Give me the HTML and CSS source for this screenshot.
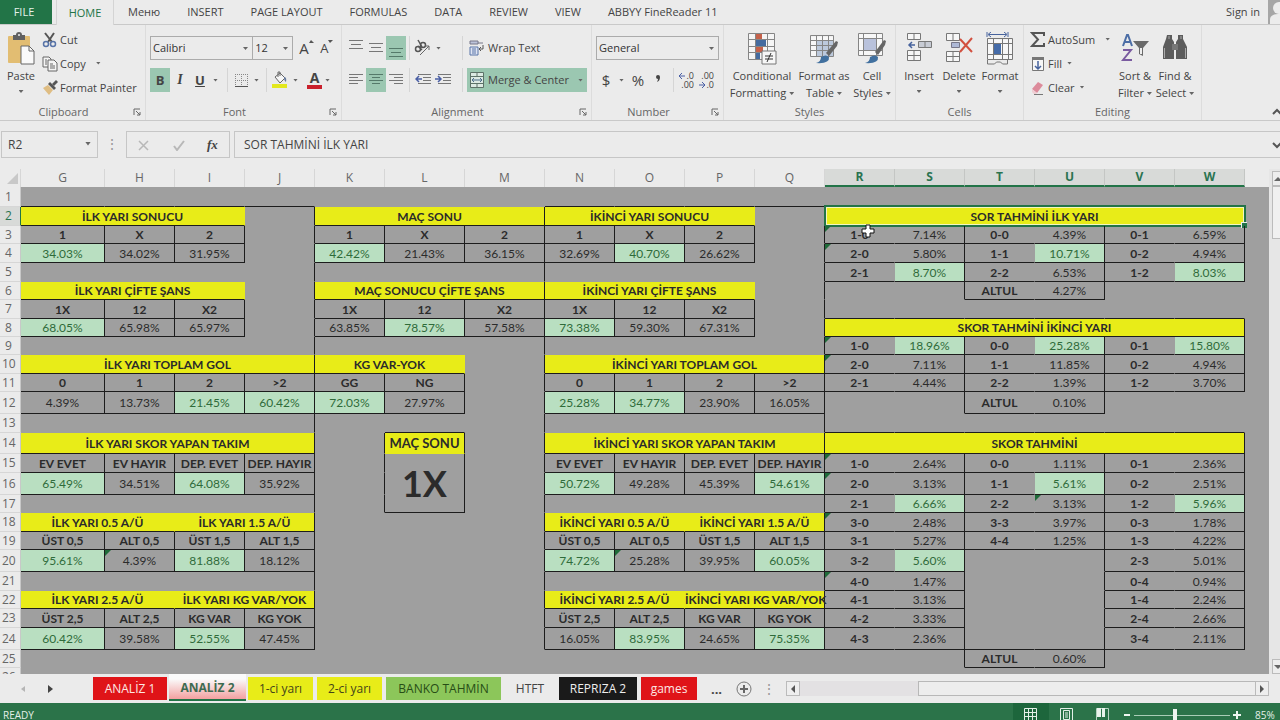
FILE: index.html
```html
<!DOCTYPE html>
<html lang="tr">
<head>
<meta charset="utf-8">
<title>ANALİZ 2</title>
<link rel="stylesheet" href="styles.css">
</head>
<body>
<div class="app">
  <nav class="tabs">
    <button class="file">FILE</button>
    <button class="tab home">HOME</button>
    <button class="tab">Меню</button>
    <button class="tab">INSERT</button>
    <button class="tab">PAGE LAYOUT</button>
    <button class="tab">FORMULAS</button>
    <button class="tab">DATA</button>
    <button class="tab">REVIEW</button>
    <button class="tab">VIEW</button>
    <button class="tab">ABBYY FineReader 11</button>
    <button class="signin">Sign in</button>
    <svg class="avatar" width="12" height="24" viewBox="0 0 12 24"><path fill="#a6a6a6" d="M0 0h12v24H0z"/><circle cx="11" cy="8" r="6" fill="#ececec"/><path d="M2 24v-4c0-5 4-6 10-6v10z" fill="#ececec"/></svg>
  </nav>

  <div class="ribbon">
    <section class="group g-clip">
      <div class="content">
        <button class="big paste">
          <svg width="28" height="34" viewBox="0 0 28 34"><rect x="1" y="4" width="22" height="27" rx="1" fill="#e2bd72"/><path d="M6 3h3a3 3 0 0 1 6 0h3v5H6z" fill="#606060"/><circle cx="12" cy="3" r="1" fill="#eee"/><path d="M14 14h8l5 5v13H14z" fill="#fafafa" stroke="#666"/><path d="M22 14v5h5" fill="none" stroke="#666"/></svg>
          <span>Paste</span><i class="caret"></i>
        </button>
        <div class="rows">
          <button class="row"><svg width="16" height="16" viewBox="0 0 16 16"><path d="M3 1l7 9M12 1L6 10" stroke="#555" stroke-width="2"/><circle cx="4" cy="12" r="2.500" fill="none" stroke="#5874a8" stroke-width="1.500"/><circle cx="11" cy="12" r="2.500" fill="none" stroke="#5874a8" stroke-width="1.500"/></svg>Cut</button>
          <button class="row"><svg width="16" height="16" viewBox="0 0 16 16"><path d="M1 1h6l2 2v8H1z" fill="#f4f4f4" stroke="#666"/><path d="M6 4h6l3 3v8H6z" fill="#f4f4f4" stroke="#666"/><path d="M3 4h2M3 6h2M3 8h2M8 8h3M8 10h5M8 12h5" stroke="#666"/></svg>Copy<i class="caret wide"></i></button>
          <button class="row"><svg width="16" height="16" viewBox="0 0 16 16"><path d="M1 8l5-3 5 5-4 5z" fill="#dfbd83"/><path d="M6 4l2-2 6 6-2 2z" fill="#555"/><path d="M10 4l4-4 2 2-4 4z" fill="#555"/></svg>Format Painter</button>
        </div>
      </div>
      <footer><span>Clipboard</span><svg class="launch" width="8" height="8" viewBox="0 0 8 8"><path d="M1 7V1h6M3 3l4 4M7 4v3H4" fill="none" stroke="#666"/></svg></footer>
    </section>

    <section class="group g-font">
      <div class="content two">
        <div class="line">
          <select class="combo c-font" aria-label="Font"><option>Calibri</option></select><select class="combo c-size" aria-label="Font size"><option>12</option></select>
          <button class="ic grow" aria-label="Increase font size">A<svg width="5" height="4" viewBox="0 0 5 4"><path d="M0 3l2-3 3 3z" fill="#555"/></svg></button>
          <button class="ic shrink" aria-label="Decrease font size">A<svg width="5" height="4" viewBox="0 0 5 4"><path d="M0 0h5L2 3z" fill="#555"/></svg></button>
        </div>
        <div class="line">
          <button class="ic on b">B</button><button class="ic i">I</button><button class="ic u">U</button><i class="caret"></i>
          <i class="sep push"></i>
          <button class="ic" aria-label="Borders"><svg width="13" height="13" viewBox="0 0 13 13"><path d="M.5 0v12M6.500 0v12M12.500 0v12M0 .5h13M0 6.500h13" stroke="#888" stroke-dasharray="1 1"/><path d="M0 12.500h13" stroke="#555"/></svg></button><i class="caret"></i>
          <i class="sep"></i>
          <button class="ic" aria-label="Fill color"><svg width="16" height="18" viewBox="0 0 16 18"><path d="M3 6l5-4 5 5-5 5z" fill="#f6f6f6" stroke="#666"/><path d="M6 6V1h2v4" fill="none" stroke="#666"/><path d="M12 6q3 0 2 5-2-1-2-5" fill="#667a9e"/><path d="M0 13h15v4H0z" fill="#e3e81e"/></svg></button><i class="caret"></i>
          <button class="ic fc" aria-label="Font color">A</button><i class="caret"></i>
        </div>
      </div>
      <footer><span>Font</span><svg class="launch" width="8" height="8" viewBox="0 0 8 8"><path d="M1 7V1h6M3 3l4 4M7 4v3H4" fill="none" stroke="#666"/></svg></footer>
    </section>

    <section class="group g-align">
      <div class="content two">
        <div class="line">
          <button class="ic" aria-label="Top align"><svg width="14" height="20" viewBox="0 0 14 20"><path d="M0 2.500h14M2 6.500h10M0 10.500h14" stroke="#777"/></svg></button>
          <button class="ic" aria-label="Middle align"><svg width="14" height="20" viewBox="0 0 14 20"><path d="M0 5.500h14M2 9.500h10M0 13.500h14" stroke="#777"/></svg></button>
          <button class="ic on" aria-label="Bottom align"><svg width="14" height="20" viewBox="0 0 14 20"><path d="M0 10.500h14M2 14.500h10M0 18.500h14" stroke="#557a6a"/></svg></button>
          <i class="sep"></i>
          <button class="ic" aria-label="Orientation"><svg width="18" height="18" viewBox="0 0 18 18"><g fill="none" stroke="#555" stroke-width="1.500"><circle cx="4" cy="10" r="2.500"/><path d="M4 7l4 4"/><circle cx="9" cy="6" r="2.500"/><path d="M4 1l4 7"/></g><path d="M6 16l9-9M15 7h-4M15 7v4" stroke="#666" fill="none"/></svg></button><i class="caret"></i>
          <i class="sep end"></i>
          <button class="wide-btn"><svg width="17" height="16" viewBox="0 0 17 16"><path d="M1 1h8v3H1z" fill="#bcc3da" stroke="#778"/><path d="M9 3h5" stroke="#778"/><path d="M1 7h8v8H1zM3 9h4M3 11h4M3 13h4" fill="#dfe4f2" stroke="#5874a8"/><path d="M14 5v4h-4M12 7l-2 2 2 2" fill="none" stroke="#555"/></svg>Wrap Text</button>
        </div>
        <div class="line">
          <button class="ic" aria-label="Align left"><svg width="14" height="12" viewBox="0 0 14 12"><path d="M0 .5h14M0 3.500h9M0 6.500h14M0 9.500h9" stroke="#777"/></svg></button>
          <button class="ic on" aria-label="Center"><svg width="14" height="12" viewBox="0 0 14 12"><path d="M0 .5h14M3 3.500h8M0 6.500h14M3 9.500h8" stroke="#557a6a"/></svg></button>
          <button class="ic" aria-label="Align right"><svg width="14" height="12" viewBox="0 0 14 12"><path d="M0 .5h14M5 3.500h9M0 6.500h14M5 9.500h9" stroke="#777"/></svg></button>
          <i class="sep"></i>
          <button class="ic" aria-label="Decrease indent"><svg width="16" height="12" viewBox="0 0 16 12"><path d="M3 .5h13M8 3.500h8M8 6.500h8M3 9.500h13" stroke="#777"/><path d="M7 5H1M4 2L1 5l3 3" stroke="#4a5fa5" stroke-width="1.500" fill="none"/></svg></button>
          <button class="ic" aria-label="Increase indent"><svg width="16" height="12" viewBox="0 0 16 12"><path d="M3 .5h13M8 3.500h8M8 6.500h8M3 9.500h13" stroke="#777"/><path d="M0 5h6M3 2l3 3-3 3" stroke="#4a5fa5" stroke-width="1.500" fill="none"/></svg></button>
          <i class="sep end"></i>
          <button class="wide-btn on"><svg width="17" height="16" viewBox="0 0 17 16"><path d="M1.500 .5h13v15h-13zM1.500 4.500h13M1.500 11.500h13M8 .5v4M8 11.500v4" fill="#dceae3" stroke="#5d7268"/><path d="M3 8h10M5 6L3 8l2 2M11 6l2 2-2 2" fill="none" stroke="#4d6d8a"/></svg>Merge &amp; Center<i class="caret last"></i></button>
        </div>
      </div>
      <footer><span>Alignment</span><svg class="launch" width="8" height="8" viewBox="0 0 8 8"><path d="M1 7V1h6M3 3l4 4M7 4v3H4" fill="none" stroke="#666"/></svg></footer>
    </section>

    <section class="group g-num">
      <div class="content two">
        <div class="line"><select class="combo c-num" aria-label="Number format"><option>General</option></select></div>
        <div class="line">
          <button class="ic sym">$</button><i class="caret"></i><button class="ic sym">%</button><button class="ic" aria-label="Comma style"><svg width="6" height="10" viewBox="0 0 6 10"><path d="M1 2a2 2 0 1 1 4 0q0 4-3 5 1-2 1-3-2 0-2-2" fill="#444"/></svg></button>
          <i class="sep push"></i>
          <button class="ic dec" aria-label="Increase decimal"><span class="up"><svg width="6" height="6" viewBox="0 0 6 6"><path d="M0 3h6M3 0L0 3l3 3" stroke="#4a5fa5" fill="none"/></svg>.0</span><span>.00</span></button>
          <button class="ic dec" aria-label="Decrease decimal"><span>.00</span><span class="up"><svg width="6" height="6" viewBox="0 0 6 6"><path d="M0 3h6M3 0l3 3-3 3" stroke="#4a5fa5" fill="none"/></svg>.0</span></button>
        </div>
      </div>
      <footer><span>Number</span><svg class="launch" width="8" height="8" viewBox="0 0 8 8"><path d="M1 7V1h6M3 3l4 4M7 4v3H4" fill="none" stroke="#666"/></svg></footer>
    </section>

    <section class="group g-styles">
      <div class="content">
        <button class="big w72"><svg width="30" height="34" viewBox="0 0 30 34"><path d="M2 2h25v25H2z" fill="#f5f5f5"/><path d="M8 2h7v6H8zM8 15h8v5H8z" fill="#c5614a"/><path d="M8 8h11v6H8zM8 21h5v6H8z" fill="#456b9f"/><path d="M1.500 1.500h26v26h-26zM8.500 1v26M20.500 1v26M1 7.500h26M1 14.500h26M1 20.500h26" fill="none" stroke="#858585"/><path d="M15 19h14v13H15z" fill="#f7f7f7" stroke="#777"/><path d="M18 24h8M18 27h8M24 21l-4 9" stroke="#333"/></svg><span>Conditional</span><span>Formatting<i class="caret"></i></span></button>
        <button class="big w52"><svg width="30" height="34" viewBox="0 0 30 34"><path d="M1.500 4.500h23v20h-23z" fill="#f7f7f7"/><path d="M7 9h18v15H7z" fill="#bcc9dc"/><path d="M1.500 3.500h23v21h-23zM7.500 3v21M13.500 3v21M19.500 3v21M1 8.500h23M1 13.500h23M1 18.500h23" fill="none" stroke="#858585"/><path d="M17 21l10-12 2 1-1 4-8 10z" fill="#666"/><path d="M7 31q5-1 5-6 5-3 8 0 1 7-13 6z" fill="#41709f"/></svg><span>Format as</span><span>Table<i class="caret"></i></span></button>
        <button class="big w44"><svg width="30" height="34" viewBox="0 0 30 34"><path d="M1.500 1.500h24v22h-24z" fill="#f7f7f7"/><path d="M7 7h12v12H7z" fill="#b9c2dc"/><path d="M1.500 1.500h24v22h-24zM6.500 1v22M19.500 1v22M1 6.500h24M1 18.500h24" fill="none" stroke="#858585"/><path d="M18 20l9-12 2 1-1 4-7 10z" fill="#666"/><path d="M8 31q5-1 5-6 5-3 8 0 1 7-13 6z" fill="#41709f"/></svg><span>Cell</span><span>Styles<i class="caret"></i></span></button>
      </div>
      <footer><span>Styles</span></footer>
    </section>

    <section class="group g-cells">
      <div class="content">
        <button class="big w40"><svg width="28" height="34" viewBox="0 0 28 34"><path d="M2.500 1.500h13v6h-13zM9 1v6M2.500 18.500h13v10h-13zM9 18v10M2 23.500h13" fill="#f7f7f7" stroke="#777"/><path d="M13.500 9.500h13v6h-13z" fill="#c7cbd4" stroke="#777"/><path d="M20 9v6" stroke="#777"/><path d="M10 13H4M7 10l-3 3 3 3" fill="none" stroke="#47639d" stroke-width="1.500"/></svg><span>Insert</span><i class="caret"></i></button>
        <button class="big w40"><svg width="28" height="34" viewBox="0 0 28 34"><path d="M1.500 1.500h13v7h-13zM8 1v7M1.500 19.500h13v10h-13zM8 19v10M1 24.500h13" fill="#f7f7f7" stroke="#777"/><path d="M6.500 10.500h8v5h-8z" fill="#aeb9d6" stroke="#778"/><path d="M15 7l12 13M27 6L15 20" stroke="#d2503f" stroke-width="2"/></svg><span>Delete</span><i class="caret"></i></button>
        <button class="big w42"><svg width="28" height="34" viewBox="0 0 28 34"><path d="M1 0v5M22 0v5M3 2.500h17M5 0L2 2.500 5 5M18 0l3 2.500L18 5" fill="none" stroke="#47639d"/><path d="M1.500 7.500h25v20h-25z" fill="#f7f7f7"/><path d="M8 12h7v11H8z" fill="#456ba8"/><path d="M1.500 6.500h25v21h-25zM7.500 6v21M16.500 6v21M22.500 6v21M1 11.500h25M1 22.500h25M1.500 28v4h7l2-2h4l2 2h5v-4" fill="none" stroke="#777"/></svg><span>Format</span><i class="caret"></i></button>
      </div>
      <footer><span>Cells</span></footer>
    </section>

    <section class="group g-edit">
      <div class="content">
        <div class="rows">
          <button class="row"><svg width="16" height="18" viewBox="0 0 16 18"><path d="M14 5V2H2l6 6.500L2 15h12v-3" fill="none" stroke="#555" stroke-width="2"/></svg>AutoSum<i class="caret wide"></i></button>
          <button class="row"><svg width="16" height="16" viewBox="0 0 16 16"><path d="M2.500 1.500h11v13h-11z" fill="#f7f7f7" stroke="#777"/><path d="M2 1h12v3H2z" fill="#777"/><path d="M8 5v8M5 10l3 3 3-3" stroke="#47639d" stroke-width="1.500" fill="none"/></svg>Fill<i class="caret"></i></button>
          <button class="row"><svg width="16" height="16" viewBox="0 0 16 16"><path d="M2 9l6-7 5 3-6 8z" fill="#dc8b9b"/><path d="M2 9l5 4-1 1H4l-2-2z" fill="#f0cdd3"/><path d="M4 14.500h9" stroke="#777"/></svg>Clear<i class="caret"></i></button>
        </div>
        <button class="big w40"><svg width="28" height="34" viewBox="0 0 28 34"><path d="M2 14L6 3h1l4 11M3 10h7" stroke="#4c6ea6" stroke-width="2" fill="none"/><path d="M2 18h8L2 28h9" stroke="#7a5ba0" stroke-width="2" fill="none"/><path d="M12 9h16l-6 7v8l-4-2v-6z" fill="#6a6a6a"/><path d="M19 16h2v6h-2z" fill="#eee"/></svg><span>Sort &amp;</span><span>Filter<i class="caret"></i></span></button>
        <button class="big w40"><svg width="28" height="34" viewBox="0 0 28 34"><path d="M6 3h5v4l2 3v17H2V15l3-8zM17 3h5v4l4 8v12H15V10l2-3z" fill="#5c5c5c"/><path d="M11 12h6v6h-6z" fill="#777"/><path d="M3.500 16v10M24.500 16v10M8 4v3M20 4v3" stroke="#aaa"/></svg><span>Find &amp;</span><span>Select<i class="caret"></i></span></button>
      </div>
      <footer><span>Editing</span></footer>
    </section>
    <button class="collapse" aria-label="Collapse the ribbon"><svg width="8" height="8" viewBox="0 0 8 8"><path d="M1 6l4-4 4 4" fill="none" stroke="#555" stroke-width="2"/></svg></button>
  </div>

  <div class="formula">
    <div class="namebox"><input aria-label="Name box" value="R2"><i class="caret"></i></div>
    <span class="dots">⋮</span>
    <div class="fxbox">
      <button aria-label="Cancel"><svg width="12" height="12" viewBox="0 0 12 12"><path d="M1 2l9 9M10 2l-9 9" stroke="#b8b8b8" stroke-width="1.500"/></svg></button>
      <button aria-label="Enter"><svg width="12" height="12" viewBox="0 0 12 12"><path d="M1 7l3 4 7-9" stroke="#b8b8b8" stroke-width="2" fill="none"/></svg></button>
      <button class="fx">fx</button>
    </div>
    <div class="fval"><input aria-label="Formula bar" value="SOR TAHMİNİ İLK YARI"><svg width="8" height="8" viewBox="0 0 8 8"><path d="M1 2l4 4 4-4" fill="none" stroke="#555" stroke-width="2"/></svg></div>
  </div>

  <main class="sheet">
    <div class="grid"><table id="cells"></table></div>
    <div class="vscroll"><button aria-label="Scroll up"><svg width="6" height="4" viewBox="0 0 6 4"><path d="M0 4l4-4 4 4z" fill="#666"/></svg></button><div class="vthumb"></div><div class="vtrack"></div><button aria-label="Scroll down"><svg width="6" height="4" viewBox="0 0 6 4"><path d="M0 0l4 4 4-4z" fill="#666"/></svg></button></div>
  </main>

  <div class="sheetbar">
    <div class="navs"><button aria-label="Previous sheet"><svg width="5" height="8" viewBox="0 0 5 8"><path d="M4 1v6L0 4z" fill="#b5b5b5"/></svg></button><button aria-label="Next sheet"><svg width="5" height="8" viewBox="0 0 5 8"><path d="M0 0v8l5-4z" fill="#444"/></svg></button></div>
    <button class="st red w74">ANALİZ 1</button>
    <button class="st active w77">ANALİZ 2</button>
    <button class="st yel w65">1-ci yarı</button>
    <button class="st yel w65">2-ci yarı</button>
    <button class="st grn w115">BANKO TAHMİN</button>
    <button class="st plain w52">HTFT</button>
    <button class="st blk w78">REPRIZA 2</button>
    <button class="st red w56">games</button>
    <span class="more">...</span>
    <button class="add" aria-label="New sheet"><svg width="16" height="16" viewBox="0 0 16 16"><circle cx="8" cy="8" r="7" fill="none" stroke="#777"/><path d="M8 4v8M4 8h8" stroke="#666" stroke-width="2"/></svg></button>
    <span class="dots">⋮</span>
    <div class="hscroll"><button aria-label="Scroll left"><svg width="5" height="8" viewBox="0 0 5 8"><path d="M4 0v8L0 4z" fill="#555"/></svg></button><div class="htrack"></div><div class="hthumb"></div><button aria-label="Scroll right"><svg width="5" height="8" viewBox="0 0 5 8"><path d="M0 0v8l4-4z" fill="#555"/></svg></button></div>
  </div>

  <div class="status">
    <span class="ready">READY</span>
    <button class="view on" aria-label="Normal view"><svg width="14" height="14" viewBox="0 0 14 14"><path d="M.5 .5h12v13h-12zM4.500 0v14M8.500 0v14M0 4.500h13M0 8.500h13" fill="none" stroke="#e4f0e8"/></svg></button>
    <button class="view" aria-label="Page layout view"><svg width="14" height="14" viewBox="0 0 14 14"><path d="M.5 .5h12v13h-12zM3.500 2.500h6v9h-6zM5 5h3M5 7h3M5 9h3" fill="none" stroke="#e4f0e8"/></svg></button>
    <button class="view" aria-label="Page break view"><svg width="14" height="14" viewBox="0 0 14 14"><path d="M.5 .5h12v13h-12z" fill="none" stroke="#b5d2c0"/><path d="M1 0h4v9H1zM6 0h3v9H6z" fill="#e9f3ec"/></svg></button>
    <button class="zb" aria-label="Zoom out"><svg width="8" height="8" viewBox="0 0 8 8"><path d="M1 4h6" stroke="#eef6f0" stroke-width="2"/></svg></button>
    <input class="zoom" type="range" min="0" max="100" value="42" aria-label="Zoom">
    <button class="zb" aria-label="Zoom in"><svg width="8" height="8" viewBox="0 0 8 8"><path d="M0 4h8M4 0v8" stroke="#eef6f0" stroke-width="2"/></svg></button>
    <span class="pct">85%</span>
  </div>
</div>
<script src="sheet.js"></script>
</body>
</html>
```
FILE: styles.css
```css
* { box-sizing: border-box; }
body { margin: 0; font: 11px/16px "Open Sans", "Noto Sans", sans-serif; color: #444; background: #ebebeb; }
button, input, select { font: inherit; color: inherit; border: 0; background: none; padding: 0; margin: 0; border-radius: 0; outline: 0; }
button { white-space: nowrap; }
svg { flex: none; display: block; }
.app { height: 100vh; display: flex; flex-direction: column; overflow: hidden; }

.tabs { flex: none; height: 25px; display: flex; align-items: stretch; gap: 1px; border-bottom: 1px solid #c9c9c9; }
.file { width: 52px; background: #227447; color: #e6f2ea; margin-right: 3px; padding-right: 4px; }
.tab { padding: 0 13px; }
.tab.home { margin-bottom: -1px; width: 58px; padding: 0; background: #ebebeb; border: solid #d4d4d4; border-width: 0 1px; color: #227447; }
.signin { margin-left: auto; padding-right: 7px; }

.ribbon { flex: none; height: 96px; display: flex; border-bottom: 1px solid #c9c9c9; }
.group { flex: none; display: flex; flex-direction: column; padding-top: 3px; border-right: 1px solid #dcdcdc; }
.g-clip { width: 146px; } .g-font { width: 196px; } .g-align { width: 250px; } .g-num { width: 132px; }
.g-styles { width: 172px; } .g-cells { width: 128px; } .g-edit { width: 178px; }
.content { flex: 1; display: flex; }
.content.two { flex-direction: column; gap: 8px; padding: 8px 4px 0; }
.group footer { height: 17px; display: flex; align-items: center; color: #666; }
.group footer span { flex: 1; text-align: center; }
.launch { margin: 0 4px 0 6px; }
.caret { flex: none; display: inline-block; width: 5px; height: 3px; background: #666; clip-path: polygon(0 0, 100% 0, 50% 100%); margin: 0 0 2px 3px; }
.rows { display: flex; flex-direction: column; }
.row { height: 24px; display: flex; align-items: center; gap: 2px; text-align: left; }
.caret.wide { margin-left: 8px; }
.big { display: flex; flex-direction: column; align-items: center; padding-top: 4px; }
.big svg { margin-bottom: 1px; }
.big span { line-height: 17px; }
.big > .caret { margin: 6px 0 0; }
.paste { width: 42px; }
.w40 { width: 40px; } .w42 { width: 42px; } .w44 { width: 44px; } .w52 { width: 52px; } .w72 { width: 72px; }
.g-styles .content { padding-left: 2px; }
.g-cells .content { padding-left: 3px; }
.g-edit .rows { width: 86px; padding-left: 6px; margin-right: 5px; }
.line { height: 24px; display: flex; align-items: center; }
.combo { appearance: none; height: 24px; border: 1px solid #ababab; padding: 0 2px; color: #333; background: url("data:image/svg+xml,%3Csvg xmlns='http://www.w3.org/2000/svg' width='5' height='3'%3E%3Cpath d='M0 0h5L2.5 3z' fill='%23666'/%3E%3C/svg%3E") no-repeat right 4px center; }
.c-font { width: 106px; } .c-size { width: 42px; margin-left: -1px; } .c-num { width: 124px; }
.ic { width: 20px; height: 24px; display: flex; align-items: center; justify-content: center; font-size: 12px; }
.on { background: #9bc7b1; }
.grow, .shrink { width: 21px; font-size: 13px; align-items: flex-start; padding-top: 4px; }
.grow { margin-left: 3px; font-size: 15px; }
.b { font-weight: 700; font-size: 13px; }
.i { font: italic 700 14px "Liberation Serif", serif; }
.u { font-weight: 700; font-size: 13px; text-decoration: underline; }
.fc { height: 18px; width: 15px; margin-left: 5px; border-bottom: 4px solid #c9202c; font-weight: 700; font-size: 14px; line-height: 12px; }
.line > .caret { margin: 0 4px 0 4px; }
.line > .ic + .caret { margin-left: 3px; }
.sep { flex: none; width: 1px; height: 24px; background: #d5d5d5; margin: 0 3px; }
.sep.push { margin-left: 5px; }
.sep.end { margin-left: auto; margin-right: 4px; }
.wide-btn { width: 120px; height: 24px; display: flex; align-items: center; gap: 2px; padding-left: 2px; }
.caret.last { margin: 0 4px 0 auto; }
.sym { font-size: 15px; }
.dec { flex-direction: column; align-items: flex-end; padding-right: 3px; font-size: 9px; line-height: 9px; }
.dec .up { display: flex; align-items: center; gap: 1px; }
.collapse { margin: 83px 0 0 auto; height: 8px; }

.formula { flex: none; display: flex; height: 27px; margin: 10px 0 11px; font-size: 12px; }
.namebox, .fxbox, .fval { display: flex; align-items: center; border: 1px solid #c6c6c6; }
.namebox { width: 97px; margin-left: 1px; }
.namebox input { flex: 1; min-width: 0; padding-left: 6px; }
.namebox .caret { width: 6px; height: 4px; margin: 0 6px 2px; }
.dots { width: 28px; text-align: center; line-height: 26px; color: #999; font-size: 14px; }
.fxbox { width: 104px; justify-content: space-around; }
.fx { font: italic 700 13px "Liberation Serif", serif; }
.fval { flex: 1; margin-left: 4px; border-right: 0; }
.fval input { flex: 1; padding-left: 9px; }

.sheet { flex: 1; min-height: 0; display: flex; }
.grid { flex: 1; min-width: 0; overflow: hidden; background: linear-gradient(#ebebeb 18px, #9f9f9f 18px); }
table { width: 100%; table-layout: fixed; border-collapse: separate; border-spacing: 0; font: 12px/17px Lato, "Open Sans", sans-serif; color: #2b2b2b; }
th, td { padding: 0; text-align: center; white-space: nowrap; border: 0 solid #1c1c1c; vertical-align: middle; }
tbody td { border-width: 0 1px 1px 0; border-color: transparent; position: relative; }
tbody td.r { border-right-color: #1c1c1c; }
tbody td.d { border-bottom-color: #1c1c1c; }
th { font: 12px/16px "Open Sans", sans-serif; color: #666; background: #ebebeb; }
thead th { height: 18px; border-right: 1px solid #d6d6d6; }
thead th.sel { background: #d8dad8; color: #2a7350; font-weight: 700; border-bottom: 2px solid #227447; border-right-color: #c4c6c4; }
thead th.rest { border-right: 0; }
tbody th { border-right: 1px solid #c8c8c8; border-bottom: 1px solid #d6d6d6; text-align: left; padding-left: 5px; }
tbody th.sel { background: #d8dad8; color: #2a7350; border-right-color: #227447; }
tbody th.n2 { padding-left: 2px; }
.corner svg { margin-left: 7px; }
td.h, td.y { font-weight: 700; }
td.y { background: #e8ec18; }
td.g { background: #b9dfc1; color: #2f6b3a; }
td.mid { font-size: 13px; }
td.huge { font-size: 36px; font-weight: 700; line-height: 40px; }
.err { position: absolute; left: 0; top: 0; width: 6px; height: 6px; background: #1f6b39; clip-path: polygon(0 0, 100% 0, 0 100%); }
.pick { position: absolute; inset: -2px -2px -2px -1px; border: 2px solid #227447; box-shadow: inset 0 0 0 1px #f3f6c0; }
.pick::after { content: ""; position: absolute; right: -3px; bottom: -3px; width: 5px; height: 5px; background: #227447; border: solid #eee; border-width: 1px 0 0 1px; }
.cursor { position: absolute; left: 36px; top: -2px; z-index: 2; }

.vscroll { flex: none; width: 11px; display: flex; flex-direction: column; padding: 2px 0 0 3px; background: #e6e6e6; }
.vscroll button { height: 15px; border: 1px solid #bbb; border-right: 0; background: #ededed; display: flex; align-items: center; justify-content: flex-end; }
.vthumb { height: 53px; border: 1px solid #bbb; border-right: 0; background: #f0f0f0; }
.vtrack { flex: 1; }

.sheetbar { flex: none; height: 29px; display: flex; align-items: center; gap: 4px; }
.navs { width: 89px; display: flex; justify-content: flex-end; gap: 22px; padding: 0 36px 0 0; }
.st { height: 23px; font-size: 12px; text-align: center; }
.w74 { width: 74px; } .w77 { width: 77px; } .w78 { width: 78px; } .w65 { width: 65px; } .w115 { width: 115px; } .w56 { width: 56px; }
.active { height: 27px; align-self: flex-start; margin: 0 -2px; background: linear-gradient(#fafafa 20%, #f3a0a0); border-bottom: 2px solid #227447; color: #3d6a50; font-weight: 700; padding-top: 3px; }
.red { background: #df1418; color: #fde8e4; }
.yel { background: #e8ec18; color: #444418; }
.grn { background: #8cc65a; color: #274d16; }
.plain { margin: 0 -1px; }
.blk { background: #1a1a1a; color: #eee; }
.more { width: 31px; text-align: center; font-weight: 700; font-size: 13px; }
.add { width: 16px; }
.sheetbar .dots { width: 26px; }
.hscroll { flex: 1; display: flex; height: 15px; margin-right: 11px; }
.hscroll button { width: 14px; border: 1px solid #bbb; display: flex; align-items: center; justify-content: center; background: #eee; }
.htrack { flex: 118; background: #e3e1e3; }
.hthumb { flex: 336; border: 1px solid #b8b8b8; background: #ededed; margin-right: -1px; }

.status { flex: none; height: 17px; display: flex; align-items: flex-start; background: #2b7349; color: #e4f0e8; line-height: 24px; overflow: hidden; font-size: 10px; }
.ready { margin-left: 3px; flex: 1; }
.view { width: 36px; height: 24px; display: flex; align-items: center; justify-content: center; }
.view.on { background: #1d663c; }
.zb { width: 12px; height: 24px; display: flex; align-items: center; justify-content: center; }
.zoom { appearance: none; width: 96px; height: 24px; margin: 0 1px; background: linear-gradient(#a9cdb6, #a9cdb6) center / 100% 1px no-repeat; }
.zoom::-webkit-slider-thumb { appearance: none; width: 4px; height: 12px; background: #eef6f0; }
.pct { width: 37px; padding-left: 12px; }
```
FILE: sheet.js
```js
const COLS = "GHIJKLMNOPQRSTUVW";
const WIDTHS = [84, 70, 70, 70, 70, 80, 80, 70, 70, 70, 70, 70, 70, 70, 70, 70, 70];
const HEIGHTS = [20, 19, 18, 19, 19, 18, 19, 18, 18, 19, 18, 22, 19, 21, 19, 22, 18, 19, 18, 22, 19, 18, 19, 22, 18, 19];

// Horizontal rules: the columns that have a line under each row.
const UNDER = {
  1: "GHIJNOPQ", 2: "GHIKLMNOP", 3: "GHIKLMNOPRSTUVW", 4: "GHIKLMNOPRSTUVW", 5: "RSTUVW",
  6: "GHIKLMNOPTU", 7: "GHIKLMNOPRSTUVW", 8: "GHIKLMNOPRSTUVW", 9: "RSTUVW",
  10: "GHIJKLNOPQRSTUVW", 11: "GHIJKLNOPQRSTUVW", 12: "GHIJKLNOPQTU", 13: "LRSTUVW",
  14: "GHIJNOPQRSTUVW", 15: "GHIJNOPQRSTUVW", 16: "GHIJNOPQRSTUVW", 17: "LRSTUVW",
  18: "GHIJNOPQRSTUVW", 19: "GHIJNOPQRSTUVW", 20: "GHIJNOPQRSVW", 21: "RSVW",
  22: "GHIJNOPQRSVW", 23: "GHIJNOPQRSVW", 24: "GHIJNOPQRSTUVW", 25: "TU"
};
// Vertical rules: row ranges with a line on the right of each column.
const pairs = [[3, 4], [7, 8], [11, 12], [15, 16], [19, 20], [23, 24]];
const score = [[3, 6], [9, 12], [15, 25]];
const RIGHT = {
  G: pairs, H: pairs, I: pairs, J: [[2, 24]], K: [[3, 4], [7, 8], [11, 12], [14, 17]],
  L: [[3, 4], [7, 8], [11, 12], [14, 17]], M: [[2, 24]], N: pairs, O: pairs, P: pairs,
  Q: [[2, 24]], S: score, U: score, W: [[2, 5], [8, 11], [14, 24]]
};

// Cell values by row. "*" marks a highlighted value, "=" a bold label, "#n " a title over n columns.
const DATA = {
  2: { G: "#3 İLK YARI SONUCU", K: "#3 MAÇ SONU", N: "#3 İKİNCİ YARI SONUCU", R: "#6 SOR TAHMİNİ İLK YARI" },
  3: { G: "=1|=X|=2", K: "=1|=X|=2|=1|=X|=2", R: "=1-0|7.14%|=0-0|4.39%|=0-1|6.59%" },
  4: { G: "*34.03%|34.02%|31.95%", K: "*42.42%|21.43%|36.15%|32.69%|*40.70%|26.62%", R: "=2-0|5.80%|=1-1|*10.71%|=0-2|4.94%" },
  5: { R: "=2-1|*8.70%|=2-2|6.53%|=1-2|*8.03%" },
  6: { G: "#3 İLK YARI ÇİFTE ŞANS", K: "#3 MAÇ SONUCU ÇİFTE ŞANS", N: "#3 İKİNCİ YARI ÇİFTE ŞANS", T: "=ALTUL|4.27%" },
  7: { G: "=1X|=12|=X2", K: "=1X|=12|=X2|=1X|=12|=X2" },
  8: { G: "*68.05%|65.98%|65.97%", K: "63.85%|*78.57%|57.58%|*73.38%|59.30%|67.31%", R: "#6 SKOR TAHMİNİ İKİNCİ YARI" },
  9: { R: "=1-0|*18.96%|=0-0|*25.28%|=0-1|*15.80%" },
  10: { G: "#4 İLK YARI TOPLAM GOL", K: "#2 KG VAR-YOK", N: "#4 İKİNCİ YARI TOPLAM GOL", R: "=2-0|7.11%|=1-1|11.85%|=0-2|4.94%" },
  11: { G: "=0|=1|=2|=>2|=GG|=NG", N: "=0|=1|=2|=>2|=2-1|4.44%|=2-2|1.39%|=1-2|3.70%" },
  12: { G: "4.39%|13.73%|*21.45%|*60.42%|*72.03%|27.97%", N: "*25.28%|*34.77%|23.90%|16.05%", T: "=ALTUL|0.10%" },
  14: { G: "#4 İLK YARI SKOR YAPAN TAKIM", L: "#1 MAÇ SONU", N: "#4 İKİNCİ YARI SKOR YAPAN TAKIM", R: "#6 SKOR TAHMİNİ" },
  15: { G: "=EV EVET|=EV HAYIR|=DEP. EVET|=DEP. HAYIR", L: "=1X", N: "=EV EVET|=EV HAYIR|=DEP. EVET|=DEP. HAYIR|=1-0|2.64%|=0-0|1.11%|=0-1|2.36%" },
  16: { G: "*65.49%|34.51%|*64.08%|35.92%", N: "*50.72%|49.28%|45.39%|*54.61%|=2-0|3.13%|=1-1|*5.61%|=0-2|2.51%" },
  17: { R: "=2-1|*6.66%|=2-2|3.13%|=1-2|*5.96%" },
  18: { G: "#2 İLK YARI 0.5 A/Ü", I: "#2 İLK YARI 1.5 A/Ü", N: "#2 İKİNCİ YARI 0.5 A/Ü", P: "#2 İKİNCİ YARI 1.5 A/Ü", R: "=3-0|2.48%|=3-3|3.97%|=0-3|1.78%" },
  19: { G: "=ÜST 0,5|=ALT 0,5|=ÜST 1,5|=ALT 1,5", N: "=ÜST 0,5|=ALT 0,5|=ÜST 1,5|=ALT 1,5|=3-1|5.27%|=4-4|1.25%|=1-3|4.22%" },
  20: { G: "*95.61%|4.39%|*81.88%|18.12%", N: "*74.72%|25.28%|39.95%|*60.05%|=3-2|*5.60%", V: "=2-3|5.01%" },
  21: { R: "=4-0|1.47%", V: "=0-4|0.94%" },
  22: { G: "#2 İLK YARI 2.5 A/Ü", I: "#2 İLK YARI KG VAR/YOK", N: "#2 İKİNCİ YARI 2.5 A/Ü", P: "#2 İKİNCİ YARI KG VAR/YOK", R: "=4-1|3.13%", V: "=1-4|2.24%" },
  23: { G: "=ÜST 2,5|=ALT 2,5|=KG VAR|=KG YOK", N: "=ÜST 2,5|=ALT 2,5|=KG VAR|=KG YOK|=4-2|3.33%", V: "=2-4|2.66%" },
  24: { G: "*60.42%|39.58%|*52.55%|47.45%", N: "16.05%|*83.95%|24.65%|*75.35%|=4-3|2.36%", V: "=3-4|2.11%" },
  25: { T: "=ALTUL|0.60%" }
};
const ERRORS = ["R3", "R4", "R9", "R10", "R15", "R16", "R18", "R21", "H20", "O20", "U17"];
const CURSOR = '<svg class="cursor" width="14" height="14" viewBox="0 0 14 14"><path d="M5 1h4v4h4v4H9v4H5V9H1V5h4z" fill="#fff" stroke="#111"/></svg>';

const selected = c => c >= "R";
let html = '<colgroup><col style="width:21px">' + WIDTHS.map(w => `<col style="width:${w}px">`).join("") + "<col></colgroup>";
html += '<thead><tr><th class="corner"><svg width="11" height="11" viewBox="0 0 11 11"><path d="M11 0v11H0z" fill="#c8c8c8"/></svg></th>';
for (const c of COLS) html += `<th class="${selected(c) ? "sel" : ""}">${c}</th>`;
html += '<th class="rest"></th></tr></thead><tbody>';

HEIGHTS.forEach((height, index) => {
  const row = index + 1;
  const cells = {};
  for (const [start, text] of Object.entries(DATA[row] || {})) {
    text.split("|").forEach((t, k) => { cells[COLS[COLS.indexOf(start) + k]] = t; });
  }
  html += `<tr style="height:${height}px"><th class="${row === 2 ? "sel" : ""} ${row > 9 ? "n2" : ""}">${row}</th>`;
  for (let i = 0; i < COLS.length; i++) {
    const col = COLS[i];
    if (col === "L" && (row === 16 || row === 17)) continue;
    let text = cells[col] || "";
    const cls = [];
    let span = 1, attrs = "", extra = "";
    if (text[0] === "#") { span = +text[1]; text = text.slice(3); cls.push("y"); }
    else if (text[0] === "=") { text = text.slice(1); cls.push("h"); }
    else if (text[0] === "*") { text = text.slice(1); cls.push("g"); }
    if (col === "L" && row === 14) cls.push("mid");
    let last = row;
    if (col === "L" && row === 15) { attrs += ' rowspan="3"'; cls.push("huge"); last = 17; }
    const end = COLS[i + span - 1];
    if ((RIGHT[end] || []).some(([a, b]) => row >= a && row <= b)) cls.push("r");
    if ((UNDER[last] || "").includes(col)) cls.push("d");
    if (span > 1) attrs += ` colspan="${span}"`;
    if (ERRORS.includes(col + row)) extra += '<i class="err"></i>';
    if (col === "R" && row === 2) extra += '<i class="pick"></i>';
    if (col === "R" && row === 3) extra += CURSOR;
    html += `<td class="${cls.join(" ")}"${attrs}>${text.replace(">", "&gt;")}${extra}</td>`;
    i += span - 1;
  }
  html += "<td></td></tr>";
});
document.getElementById("cells").innerHTML = html + "</tbody>";
```
